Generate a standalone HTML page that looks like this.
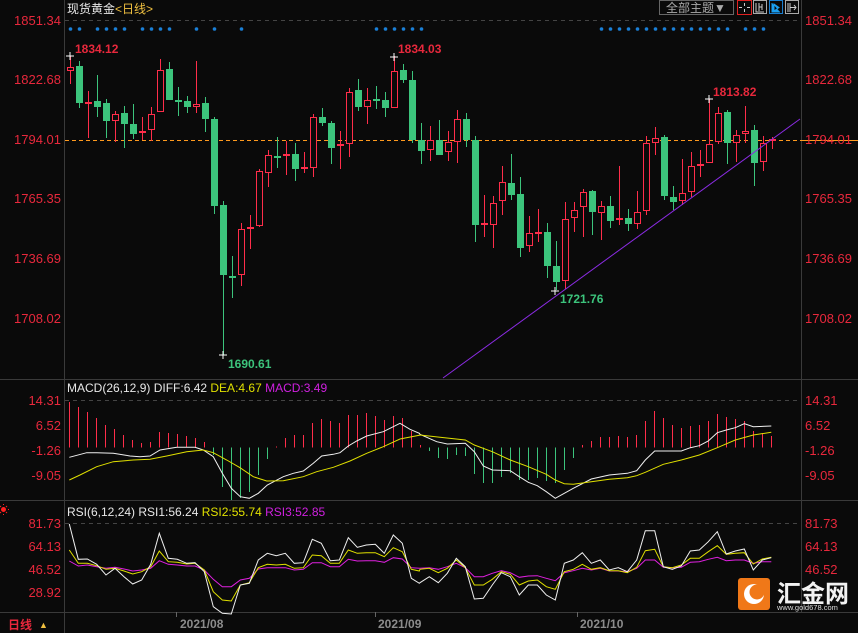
<!DOCTYPE html>
<html><head><meta charset="utf-8"><style>
html,body{margin:0;padding:0;background:#0a0a0a;width:858px;height:633px;overflow:hidden}
svg{display:block}
text{font-family:"Liberation Sans","Noto Sans CJK SC",sans-serif}
</style></head><body>
<svg id="s" width="858" height="633" viewBox="0 0 858 633" xmlns="http://www.w3.org/2000/svg">
<rect width="858" height="633" fill="#0a0a0a"/>
<line x1="64.5" y1="0" x2="64.5" y2="633" stroke="#3a3a3a"/>
<line x1="801.5" y1="0" x2="801.5" y2="612" stroke="#3a3a3a"/>
<line x1="0" y1="379.5" x2="858" y2="379.5" stroke="#3a3a3a"/>
<line x1="0" y1="500.5" x2="858" y2="500.5" stroke="#3a3a3a"/>
<line x1="0" y1="612.5" x2="858" y2="612.5" stroke="#3a3a3a"/>
<line x1="65" y1="20.5" x2="801" y2="20.5" stroke="#444" stroke-dasharray="4,4"/>
<line x1="65" y1="400.5" x2="801" y2="400.5" stroke="#444" stroke-dasharray="4,4"/>
<line x1="65" y1="523.5" x2="801" y2="523.5" stroke="#444" stroke-dasharray="4,4"/>
<line x1="65" y1="140.5" x2="801" y2="140.5" stroke="#ff9a1e" stroke-dasharray="4,3"/>
<line x1="801" y1="140.5" x2="858" y2="140.5" stroke="#ff9a1e"/>
<g id="g"></g>
<text x="67" y="13" font-size="12" fill="#e8e8e8">现货黄金</text>
<text x="115" y="13" font-size="12" fill="#f0c040">&lt;日线&gt;</text>
<rect x="659.5" y="0.5" width="74" height="14" fill="none" stroke="#666"/>
<text x="666" y="12" font-size="12" fill="#aaa">全部主题▼</text>
<rect x="737.5" y="0.5" width="14" height="14" fill="none" stroke="#e02020"/>
<path d="M744.5 3v3M744.5 9v3M739 7.5h3M747 7.5h3" stroke="#ccc"/>
<rect x="753.5" y="0.5" width="13" height="13" fill="none" stroke="#aaa"/>
<path d="M756 3v9h8M759 3v8M762 4v6M759 7h3" stroke="#ccc" fill="none"/>
<rect x="769.5" y="0.5" width="13" height="13" fill="none" stroke="#1a7fd0"/>
<path d="M772 3v9h8M774 4l5 3.5-5 3.5z" stroke="#1a9ff0" fill="#1a9ff0"/>
<rect x="785.5" y="0.5" width="13" height="13" fill="none" stroke="#aaa"/>
<path d="M788 3v9M790 3v9M790 7.5h6M794 5l2 2.5-2 2.5" stroke="#ccc" fill="none"/>
<g font-size="13" fill="#e8283c">
<text x="61" y="25" text-anchor="end">1851.34</text>
<text x="61" y="84" text-anchor="end">1822.68</text>
<text x="61" y="144" text-anchor="end">1794.01</text>
<text x="61" y="203" text-anchor="end">1765.35</text>
<text x="61" y="263" text-anchor="end">1736.69</text>
<text x="61" y="323" text-anchor="end">1708.02</text>
<text x="805" y="25">1851.34</text>
<text x="805" y="84">1822.68</text>
<text x="805" y="144">1794.01</text>
<text x="805" y="203">1765.35</text>
<text x="805" y="263">1736.69</text>
<text x="805" y="323">1708.02</text>
<text x="61" y="405" text-anchor="end">14.31</text>
<text x="61" y="430" text-anchor="end">6.52</text>
<text x="61" y="455" text-anchor="end">-1.26</text>
<text x="61" y="480" text-anchor="end">-9.05</text>
<text x="805" y="405">14.31</text>
<text x="805" y="430">6.52</text>
<text x="805" y="455">-1.26</text>
<text x="805" y="480">-9.05</text>
<text x="61" y="528" text-anchor="end">81.73</text>
<text x="61" y="551" text-anchor="end">64.13</text>
<text x="61" y="574" text-anchor="end">46.52</text>
<text x="61" y="597" text-anchor="end">28.92</text>
<text x="805" y="528">81.73</text>
<text x="805" y="551">64.13</text>
<text x="805" y="574">46.52</text>
</g>
<g font-size="12" font-weight="bold">
<text x="75" y="53" fill="#e8283c">1834.12</text>
<text x="398" y="53" fill="#e8283c">1834.03</text>
<text x="713" y="96" fill="#e8283c">1813.82</text>
<text x="228" y="368" fill="#3cc47c">1690.61</text>
<text x="560" y="303" fill="#3cc47c">1721.76</text>
</g>
<path d="M66 56h8M70 52v8M390 57h8M394 53v8M705 99h8M709 95v8M219 355h8M223 351v8M551 291h8M555 287v8" stroke="#fff"/>
<line x1="443" y1="378" x2="800" y2="119" stroke="#8a2be2"/>
<text x="67" y="392" font-size="12"><tspan fill="#e8e8e8">MACD(26,12,9) DIFF:6.42 </tspan><tspan fill="#e0e000">DEA:4.67 </tspan><tspan fill="#d020e0">MACD:3.49</tspan></text>
<text x="67" y="516" font-size="12"><tspan fill="#e8e8e8">RSI(6,12,24) RSI1:56.24 </tspan><tspan fill="#e0e000">RSI2:55.74 </tspan><tspan fill="#d020e0">RSI3:52.85</tspan></text>
<circle cx="3.5" cy="509.5" r="2.5" fill="#ff2020"/>
<path d="M3.5 504v1M3.5 514v1M-2 509.5h1M8 509.5h1M0 506l1 1M7 506l-1 1M0 513l1-1M7 513l-1-1" stroke="#ff2020"/>
<text x="8" y="629" font-size="12" font-weight="bold" fill="#e8283c">日线</text>
<text x="39" y="628" font-size="9" fill="#f0c040">▲</text>
<line x1="176.5" y1="612" x2="176.5" y2="617" stroke="#666"/>
<line x1="375.5" y1="612" x2="375.5" y2="617" stroke="#666"/>
<line x1="577.5" y1="612" x2="577.5" y2="617" stroke="#666"/>
<g font-size="12" font-weight="bold" fill="#8c8c8c">
<text x="180" y="628">2021/08</text>
<text x="378" y="628">2021/09</text>
<text x="580" y="628">2021/10</text>
</g>
<rect x="738" y="578" width="32" height="32" rx="3" fill="#f07818"/>
<circle cx="754" cy="594" r="10" fill="#fff"/>
<circle cx="757" cy="592" r="7.5" fill="#f07818"/>
<text x="777" y="602" font-size="24" font-weight="bold" fill="#f2f2f2" font-family="Noto Sans CJK SC,sans-serif">汇金网</text>
<text x="777" y="610" font-size="7.5" fill="#ddd">www.gold678.com</text>
</svg>
<script>
var G=document.getElementById('g'),h='';
var R='#ff2d4a',Gr='#3cc47c';
var C=[[1,67,71,56,84],[0,66,103,61,108],[1,102,104,91,138],[0,101,107,75,117],[0,103,121,99,138],[1,114,121,111,142],[0,113,124,106,148],[0,124,134,104,139],[1,131,133,117,140],[1,114,130,107,141],
[1,70,112,59,112],[0,69,100,62,100],[0,100,100,87,116],[0,101,107,96,113],[1,104,107,61,113],[0,103,119,97,132],[0,119,206,117,214],[0,205,275,201,355],[0,276,276,256,298],[1,229,275,223,286],
[1,227,229,215,249],[1,171,226,169,227],[1,155,173,150,187],[0,156,156,137,168],[1,154,156,141,175],[0,154,169,143,181],[1,168,168,152,173],[1,117,168,114,177],[0,117,123,108,126],[0,123,148,121,164],
[1,144,146,131,169],[1,92,144,88,157],[0,90,107,79,111],[1,100,107,88,124],[0,99,99,86,109],[0,100,108,92,117],[1,71,108,56,108],[0,70,80,64,83],[0,80,140,71,143],[0,140,151,123,164],
[1,140,150,126,161],[0,140,155,120,155],[1,142,152,131,161],[1,119,142,110,163],[0,119,140,113,147],[0,140,225,136,242],[1,224,224,195,237],[1,203,225,196,248],[1,182,201,166,215],[0,183,195,154,200],
[0,194,248,177,257],[1,233,246,216,252],[1,233,233,209,242],[0,232,266,223,278],[0,266,282,241,290],[1,219,281,202,289],[1,210,218,202,232],[1,192,207,189,237],[0,191,212,190,235],[1,206,213,201,240],
[0,206,221,196,228],[1,219,219,166,225],[0,218,224,209,231],[1,212,224,191,229],[1,143,211,136,215],[1,138,143,127,155],[0,137,196,135,200],[0,197,202,186,210],[1,193,201,159,205],[1,166,192,152,197],
[1,165,165,150,177],[1,144,163,99,163],[1,113,142,107,144],[0,112,143,110,164],[1,135,143,130,162],[1,131,134,106,143],[0,130,163,125,186],[1,143,162,136,171],[1,140,140,137,149]];
C.forEach(function(c,i){var x=70+9*i,col=c[0]?R:Gr;
 h+='<line x1="'+(x+.5)+'" y1="'+c[3]+'" x2="'+(x+.5)+'" y2="'+c[4]+'" stroke="'+col+'"/>';
 var hh=Math.max(c[2]-c[1],1);
 if(c[0]){ if(hh<=1) h+='<rect x="'+(x-3)+'" y="'+(c[1]-1)+'" width="7" height="2" fill="'+col+'"/>';
  else h+='<rect x="'+(x-2.5)+'" y="'+(c[1]+.5)+'" width="6" height="'+(hh-1)+'" fill="#0a0a0a" stroke="'+col+'"/>';}
 else h+='<rect x="'+(x-3)+'" y="'+c[1]+'" width="7" height="'+Math.max(hh,2)+'" fill="'+col+'"/>';
});
[0,1,3,4,5,6,8,9,10,11,14,16,19,34,35,36,37,38,39,59,60,61,62,63,64,65,66,67,68,69,70,71,72,73,75,76,77].forEach(function(i){
 h+='<circle cx="'+(70.5+9*i)+'" cy="29" r="1.8" fill="#1a80d8"/>';});
var Z=447.5;
var M=[402,407,412,418,425,429,435,440,443,442,432,433,434,436,438,442,455,487,500,498,492,475,459,447,438,435,435,423,419,421,423,415,415,413,416,420,416,418,431,445,451,458,459,455,456,474,483,483,477,473,480,480,478,481,483,470,458,445,441,437,437,436,437,435,421,411,418,425,428,426,425,421,414,417,419,421,431,433,436];
M.forEach(function(v,i){var x=69.5+9*i;if(Math.abs(v-Z)<1)v=v<Z?Z-1:Z+1;
 h+='<line x1="'+x+'" y1="'+Z+'" x2="'+x+'" y2="'+v+'" stroke="'+(v<Z?R:Gr)+'"/>';});
function pl(a,ox,oy,col){var s=a.map(function(p){return (ox+p[0]/3).toFixed(1)+','+(oy+p[1]/3).toFixed(1)}).join(' ');
 return '<polyline points="'+s+'" fill="none" stroke="'+col+'" stroke-width="1"/>';}
function pl2(a,b,col){return pl(a.concat(b.map(function(p){return [p[0]+1260,p[1]+30]})),0,370,col);}
var D1=[[208,262],[260,248],[290,248],[340,250],[390,258],[420,260],[450,258],[480,240],[530,232],[585,232],[610,240],[640,260],[667,310],[694,355],[721,380],[748,385],[775,370],[802,345],[850,320],[880,310],[910,303],[940,280],[965,258],[1000,253],[1020,248],[1045,228],[1070,213],[1100,198],[1150,185],[1200,160],[1230,178],[1258,190]];
var D2=[[0,163],[50,185],[82,192],[136,190],[163,215],[190,258],[217,270],[271,272],[298,290],[325,307],[352,317],[379,335],[406,355],[460,325],[514,297],[541,291],[568,285],[622,280],[650,272],[676,240],[704,213],[784,213],[811,203],[838,197],[865,183],[892,158],[919,150],[946,143],[973,131],[1000,140],[1054,138]];
var E1=[[208,330],[240,315],[290,290],[340,275],[400,270],[450,268],[500,258],[560,245],[610,240],[640,248],[680,270],[720,293],[760,320],[800,333],[850,332],[910,320],[950,305],[1000,292],[1050,273],[1100,250],[1150,230],[1200,207],[1258,196]];
var E2=[[0,165],[60,172],[136,180],[163,195],[217,215],[271,240],[325,260],[379,283],[406,300],[433,311],[460,313],[514,305],[568,298],[622,293],[650,287],[676,277],[730,253],[784,240],[838,225],[892,203],[946,180],[1000,165],[1054,157]];
h+=pl2(D1,D2,'#f0f0f0')+pl2(E1,E2,'#e0e000');
var r1a=[[208,462],[235,568],[262,567],[290,583],[318,615],[345,595],[372,620],[398,642],[425,630],[452,583],[478,490],[505,565],[532,568],[560,580],[585,578],[613,605],[640,710],[667,730],[694,732],[721,645],[748,640],[775,570],[802,550],[829,557],[856,550],[883,580],[910,578],[937,508],[964,520],[991,572],[1018,570],[1045,503],[1072,532],[1099,525],[1126,523],[1153,550],[1180,495],[1207,520],[1234,625],[1258,640]];
var r1b=[[0,608],[28,590],[55,608],[82,580],[109,535],[136,560],[163,657],[190,655],[217,615],[244,578],[271,590],[298,645],[325,615],[352,615],[379,645],[406,660],[433,550],[460,540],[487,518],[514,550],[541,540],[568,570],[595,563],[622,575],[650,540],[676,452],[704,452],[730,560],[757,568],[784,558],[811,513],[838,510],[865,485],[892,455],[919,522],[946,513],[973,507],[1000,570],[1027,540],[1054,533]];
var r2a=[[208,540],[235,580],[262,580],[290,587],[318,598],[345,595],[372,603],[398,612],[425,605],[452,590],[478,543],[505,575],[532,577],[560,582],[585,580],[613,600],[640,665],[667,690],[694,693],[721,645],[748,638],[775,593],[802,583],[829,585],[856,583],[883,595],[910,593],[937,555],[964,557],[991,580],[1018,580],[1045,540],[1072,550],[1099,548],[1126,548],[1153,560],[1180,533],[1207,545],[1234,598],[1258,603]];
var r2b=[[0,568],[28,565],[55,578],[82,565],[109,540],[136,563],[163,615],[190,615],[217,598],[244,575],[271,583],[298,615],[325,603],[352,600],[379,620],[406,628],[433,575],[460,568],[487,553],[514,568],[541,563],[568,572],[595,572],[622,578],[650,562],[676,512],[704,508],[730,560],[757,563],[784,555],[811,535],[838,535],[865,515],[892,497],[919,523],[946,520],[973,518],[1000,552],[1027,537],[1054,532]];
var r3a=[[208,573],[235,588],[262,585],[290,590],[318,595],[345,592],[372,597],[398,603],[425,600],[452,595],[478,572],[505,583],[532,585],[560,588],[585,588],[613,600],[640,628],[667,650],[694,650],[721,630],[748,625],[775,597],[802,593],[829,593],[856,593],[883,600],[910,598],[937,578],[964,578],[991,590],[1018,590],[1045,568],[1072,573],[1099,572],[1126,572],[1153,577],[1180,563],[1207,567],[1234,593],[1258,595]];
var r3b=[[0,565],[28,563],[55,568],[82,560],[109,550],[136,563],[163,590],[190,590],[217,580],[244,572],[271,578],[298,592],[325,588],[352,587],[379,595],[406,602],[433,578],[460,572],[487,565],[514,570],[541,565],[568,573],[595,573],[622,575],[650,565],[676,540],[704,540],[730,562],[757,563],[784,562],[811,547],[838,545],[865,538],[892,532],[919,542],[946,540],[973,540],[1000,550],[1027,545],[1054,545]];
h+=pl2(r3a,r3b,'#e020e0')+pl2(r2a,r2b,'#e0e000')+pl2(r1a,r1b,'#f0f0f0');
G.innerHTML=h;
</script>
</body></html>
